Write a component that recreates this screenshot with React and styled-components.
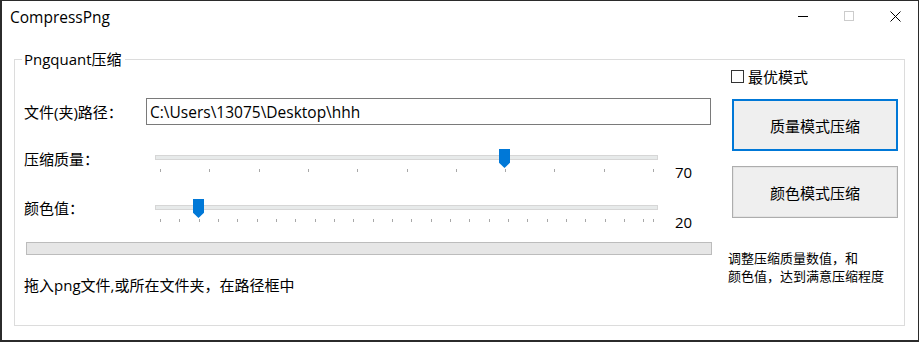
import React from "react";
import styled, { createGlobalStyle } from "styled-components";

const GlobalStyle = createGlobalStyle`
  html, body {
    margin: 0;
    padding: 0;
    background: #ffffff;
  }
  body {
    font-family: "Open Sans", "Noto Sans CJK SC", sans-serif;
    font-size: 15px;
    color: #000;
  }
  * {
    box-sizing: border-box;
  }
`;

const Window = styled.div`
  width: 919px;
  height: 342px;
  border: 1px solid #2b2b2b;
  border-left-width: 2px;
  border-bottom-width: 2px;
  background: #fff;
  display: flex;
  flex-direction: column;
`;

const TitleBar = styled.div`
  height: 31px;
  display: flex;
  align-items: center;
  padding-left: 8px;
  flex-shrink: 0;
`;

const Title = styled.div`
  flex: 1;
  font-size: 15.5px;
  line-height: 20px;
  margin-top: 1px;
`;

const CaptionButton = styled.div`
  width: 46px;
  height: 31px;
  display: flex;
  align-items: center;
  justify-content: center;
`;

const Body = styled.div`
  flex: 1;
  padding: 27px 13px 0 12px;
`;

const GroupBox = styled.div`
  position: relative;
  width: 891px;
  height: 267px;
  border: 1px solid #dcdcdc;
  display: grid;
  grid-template-columns: 688px 170px;
  column-gap: 16px;
  padding-left: 9px;
`;

const Legend = styled.div`
  position: absolute;
  top: -11px;
  left: 7px;
  padding: 0 3px 0 2px;
  background: #fff;
  line-height: 20px;
`;

const LeftColumn = styled.div`
  display: flex;
  flex-direction: column;
`;

const PathRow = styled.div`
  display: flex;
  align-items: center;
  margin-top: 38px;
  height: 27px;
`;

const Label = styled.div`
  width: ${(p) => p.width || 131}px;
  flex-shrink: 0;
  line-height: 20px;
  margin-top: ${(p) => p.offset || 0}px;
`;

const PathInput = styled.input`
  width: 565px;
  height: 27px;
  border: 1px solid #7a7a7a;
  padding: 0 3px;
  font-family: "Open Sans", "Noto Sans CJK SC", sans-serif;
  font-size: 15.5px;
  color: #000;
  outline: none;
  background: #fff;
`;

const SliderRow = styled.div`
  display: flex;
  align-items: flex-start;
  height: 28px;
  margin-top: ${(p) => p.gap}px;
`;

const SliderBox = styled.div`
  position: relative;
  width: 503px;
  height: 28px;
  flex-shrink: 0;
`;

const Track = styled.div`
  margin-top: 8px;
  height: 5px;
  background: #e7eaea;
  border: 1px solid #d6d6d6;
`;

const Thumb = styled.div`
  position: absolute;
  top: 2px;
  width: 11px;
  height: 19px;
  background: #0078d7;
  clip-path: polygon(0 0, 100% 0, 100% 72%, 50% 100%, 0 72%);
`;

const Tick = styled.div`
  position: absolute;
  top: 22px;
  width: 1px;
  height: 3px;
  background: #a8a8a8;
`;

const Value = styled.div`
  margin-left: 17px;
  margin-top: ${(p) => p.offset}px;
  line-height: 20px;
`;

const Progress = styled.div`
  margin-top: 17px;
  margin-left: 2px;
  width: 686px;
  height: 13px;
  background: #e6e6e6;
  border: 1px solid #bcbcbc;
`;

const Hint = styled.div`
  margin-top: 20px;
  line-height: 20px;
`;

const RightColumn = styled.div`
  display: flex;
  flex-direction: column;
`;

const CheckRow = styled.label`
  display: flex;
  align-items: center;
  margin-top: 6px;
  margin-left: 3px;
  height: 20px;
  gap: 4px;
`;

const CheckBox = styled.span`
  width: 13px;
  height: 13px;
  border: 1px solid #333;
  background: #fff;
`;

const ActionButton = styled.div`
  margin-left: 4px;
  margin-top: ${(p) => p.gap}px;
  width: 166px;
  height: 52px;
  display: flex;
  align-items: center;
  justify-content: center;
  background: #efefef;
  border: ${(p) => (p.focused ? "2px solid #0078d7" : "1px solid #adadad")};
  box-shadow: ${(p) => (p.focused ? "none" : "inset 0 0 0 1px #e4e4e4")};
`;

const Note = styled.div`
  margin-top: 31px;
  font-size: 13px;
  line-height: 18px;
`;

const SliderTicks = ({ max, step }) => {
  const values = [];
  for (let v = 0; v <= max; v += step) values.push(v);
  if (values[values.length - 1] !== max) values.push(max);
  return values.map((v) => (
    <Tick key={v} style={{ left: 5 + Math.round((493 * v) / max) }} />
  ));
};

const Slider = ({ value, max, step }) => (
  <SliderBox>
    <Track />
    <SliderTicks max={max} step={step} />
    <Thumb style={{ left: Math.round(5 + (493 * value) / max - 6) }} />
  </SliderBox>
);

const App = () => {
  return (
    <>
      <GlobalStyle />
      <Window>
        <TitleBar>
          <Title>CompressPng</Title>
          <CaptionButton>
            <svg width="11" height="11" viewBox="0 0 11 11">
              <line x1="0" y1="5.5" x2="10" y2="5.5" stroke="#000" strokeWidth="1" />
            </svg>
          </CaptionButton>
          <CaptionButton>
            <svg width="11" height="11" viewBox="0 0 11 11">
              <rect x="0.5" y="0.5" width="9" height="9" fill="none" stroke="#cccccc" strokeWidth="1" />
            </svg>
          </CaptionButton>
          <CaptionButton>
            <svg width="11" height="11" viewBox="0 0 11 11">
              <path d="M0.5 0.5 L10.5 10.5 M10.5 0.5 L0.5 10.5" stroke="#000" strokeWidth="1" />
            </svg>
          </CaptionButton>
        </TitleBar>
        <Body>
          <GroupBox>
            <Legend>Pngquant压缩</Legend>
            <LeftColumn>
              <PathRow>
                <Label width={122}>文件(夹)路径：</Label>
                <PathInput defaultValue="C:\Users\13075\Desktop\hhh" />
              </PathRow>
              <SliderRow gap={22}>
                <Label offset={2}>压缩质量：</Label>
                <Slider value={70} max={100} step={10} />
                <Value offset={15}>70</Value>
              </SliderRow>
              <SliderRow gap={22}>
                <Label offset={1}>颜色值：</Label>
                <Slider value={20} max={255} step={10} />
                <Value offset={15}>20</Value>
              </SliderRow>
              <Progress />
              <Hint>拖入png文件,或所在文件夹，在路径框中</Hint>
            </LeftColumn>
            <RightColumn>
              <CheckRow>
                <CheckBox />
                最优模式
              </CheckRow>
              <ActionButton focused gap={13}>质量模式压缩</ActionButton>
              <ActionButton gap={15}>颜色模式压缩</ActionButton>
              <Note>
                调整压缩质量数值，和
                <br />
                颜色值，达到满意压缩程度
              </Note>
            </RightColumn>
          </GroupBox>
        </Body>
      </Window>
    </>
  );
};

export default App;
